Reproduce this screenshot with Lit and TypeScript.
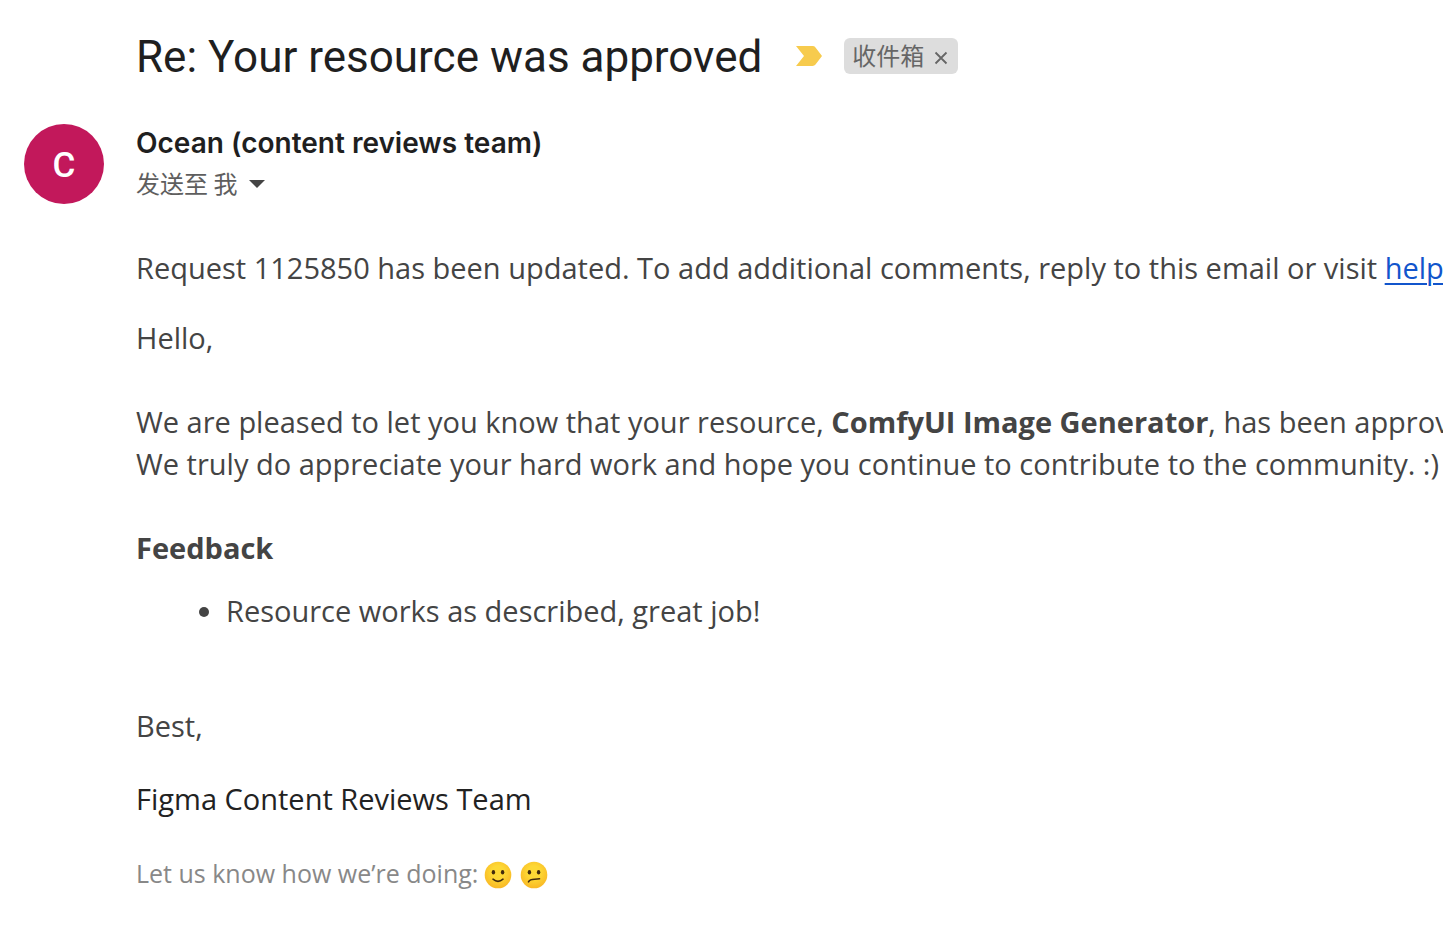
import { LitElement, html, css } from "lit";
import { customElement } from "lit/decorators.js";

@customElement("app-root")
export class AppRoot extends LitElement {
  static styles = css`
    :host {
      display: block;
      min-height: 100vh;
      overflow: hidden;
      background: #fff;
      color: #444;
      font-family: "Open Sans", "Noto Sans CJK SC", sans-serif;
    }
    .subject {
      display: flex;
      align-items: center;
      padding: 32px 24px 0 136px;
      height: 48px;
    }
    h1 {
      margin: 0;
      padding-top: 2px;
      font: 400 44px/48px Roboto, sans-serif;
      color: #1f1f1f;
      white-space: nowrap;
    }
    .marker { width: 26px; height: 20px; margin-left: 34px; flex: none; }
    .tag {
      display: flex;
      align-items: center;
      gap: 8px;
      margin-left: 22px;
      height: 36px;
      padding: 0 8px;
      border-radius: 6px;
      background: #ddd;
      color: #666;
      font: 24px/34px "Noto Sans CJK SC", sans-serif;
      white-space: nowrap;
    }
    .tag-name { padding-bottom: 2px; }
    button { border: 0; background: none; padding: 0; color: inherit; font: inherit; cursor: pointer; }
    .remove { display: flex; padding: 3px 2px 0; }
    .sender { display: flex; gap: 32px; padding: 44px 24px 0; }
    .avatar {
      flex: none;
      display: grid;
      place-items: center;
      width: 80px;
      height: 80px;
      border-radius: 50%;
      background: #c2185b;
      color: #fff;
      font: 500 35px/84px Roboto, sans-serif;
    }
    h2 { margin: 0; font: 600 28px/38px Inter, sans-serif; color: #1f1f1f; white-space: nowrap; }
    .to { display: flex; align-items: center; gap: 12px; font: 24px/42px "Noto Sans CJK SC", sans-serif; color: #5e5e5e; }
    .to svg { padding-top: 2px; }
    .body { padding: 43px 0 0 136px; font-size: 29px; line-height: 42px; white-space: nowrap; }
    p { margin: 0; }
    a { color: #15c; text-decoration-thickness: 2px; text-underline-offset: 4px; }
    .hello { margin-top: 28px; }
    .block { margin-top: 42px; }
    ul { margin: 21px 0 0; padding-left: 90px; }
    .best { margin-top: 73px; }
    .team { margin-top: 31px; color: #222; }
    .rate { display: flex; align-items: center; gap: 6px; margin-top: 32px; color: #888; font-size: 25px; }
    .faces { display: flex; gap: 8px; padding-top: 4px; }
    .faces button { display: flex; }
  `;

  private face(sad: boolean) {
    return html`<svg width="28" height="28" viewBox="0 0 28 28" aria-hidden="true">
      <defs><radialGradient id="skin" cx=".5" cy=".4" r=".6"><stop offset=".4" stop-color="#fdd835"/><stop offset="1" stop-color="#f9b825"/></radialGradient></defs>
      <circle cx="14" cy="14" r="13.3" fill="url(#skin)"/>
      <ellipse cx="9.4" cy="11.2" rx="1.7" ry="2.2" fill="#422b0d"/>
      <ellipse cx="18.6" cy="11.2" rx="1.7" ry="2.2" fill="#422b0d"/>
      <path d=${sad ? "M8.5 20.8C10.5 16.8 14.5 19 19.5 17.8" : "M9 18.2Q14 22.6 19 18.2"} fill="none" stroke="#422b0d" stroke-width="1.6" stroke-linecap="round"/>
    </svg>`;
  }

  render() {
    return html`
      <header class="subject">
        <h1>Re: Your resource was approved</h1>
        <svg class="marker" viewBox="0 0 26 20" aria-hidden="true"><path d="M0 0H16.5Q18.5 0 19.5 1.4L26 10L19.5 18.6Q18.5 20 16.5 20H0L8 10Z" fill="#f7cb4d"/></svg>
        <span class="tag"><span class="tag-name">收件箱</span>
          <button class="remove" aria-label="移除"><svg width="14" height="14" viewBox="0 0 14 14"><path d="M1.5 1.5L12.5 12.5M12.5 1.5L1.5 12.5" stroke="#666" stroke-width="1.8"/></svg></button>
        </span>
      </header>
      <section class="sender">
        <div class="avatar">C</div>
        <div>
          <h2>Ocean (content reviews team)</h2>
          <button class="to">发送至 我 <svg width="16" height="8" viewBox="0 0 16 8" aria-hidden="true"><path d="M0 0H16L8 8Z" fill="#444"/></svg></button>
        </div>
      </section>
      <main class="body">
        <p>Request 1125850 has been updated. To add additional comments, reply to this email or visit <a href="#">help.figma.com</a></p>
        <p class="hello">Hello,</p>
        <p class="block">We are pleased to let you know that your resource, <b>ComfyUI Image Generator</b>, has been approved.</p>
        <p>We truly do appreciate your hard work and hope you continue to contribute to the community. :)</p>
        <p class="block"><b>Feedback</b></p>
        <ul><li>Resource works as described, great job!</li></ul>
        <p class="best">Best,</p>
        <p class="team">Figma Content Reviews Team</p>
        <div class="rate"><span>Let us know how we’re doing:</span>
          <span class="faces"><button aria-label="满意">${this.face(false)}</button><button aria-label="不满意">${this.face(true)}</button></span>
        </div>
      </main>
    `;
  }
}
